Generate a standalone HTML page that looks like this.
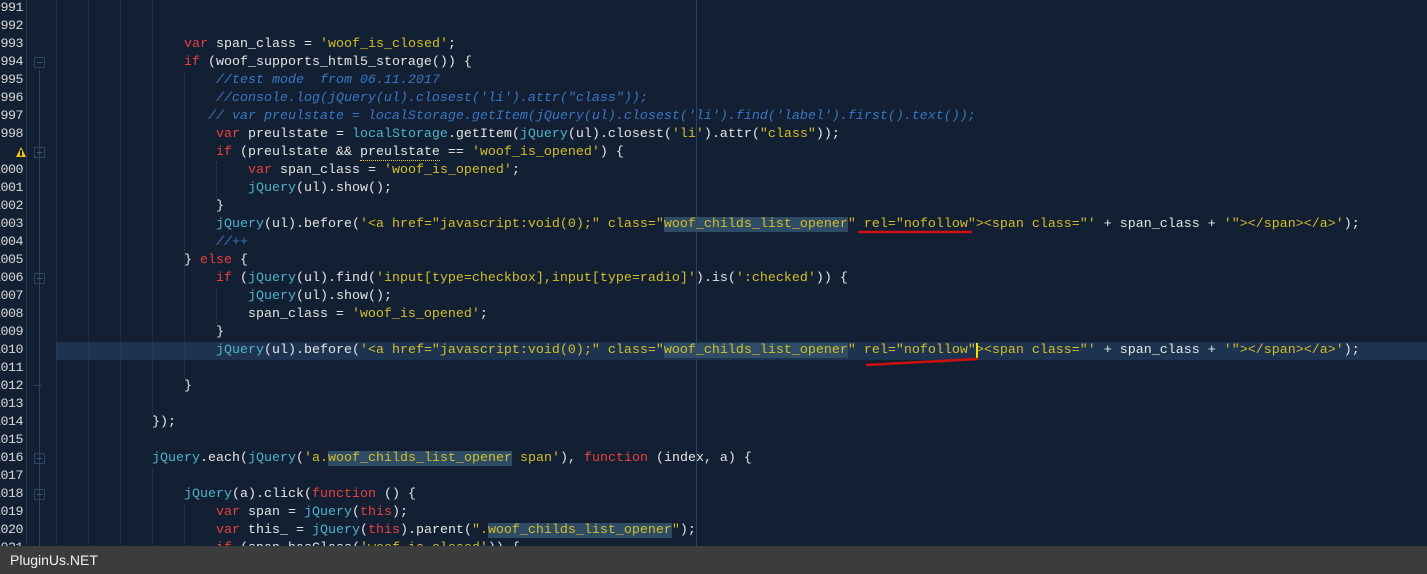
<!DOCTYPE html>
<html><head><meta charset="utf-8"><style>
html,body{margin:0;padding:0;}
body{width:1427px;height:574px;background:#131f33;position:relative;overflow:hidden;font-family:"Liberation Mono",monospace;font-size:13.33px;}
.ln{position:absolute;left:-30px;width:53px;text-align:right;color:#d8d8d8;height:18px;line-height:18px;letter-spacing:-0.5px}
.c{position:absolute;left:56px;white-space:pre;color:#e6e6e6;height:18px;line-height:18px;}
.k{color:#e8413f}.j{color:#4fb3c8}.s{color:#d2bf2a}.m{color:#3a77c4;font-style:italic}
.h{background:#2f4c66}
.g{position:absolute;top:0;height:546px;border-left:1px dotted #2f3d52}
.cur{position:absolute;top:342px;width:1371px;height:18px;background:#1d3350;left:56px}
.fold{position:absolute;left:34px;width:11px;height:11px;border:1px solid #2d4460;box-sizing:border-box}
.fold:after{content:"";position:absolute;left:2px;top:4px;width:5px;height:1px;background:#3d5a7a}
.bar{position:absolute;left:0;top:546px;width:1427px;height:28px;background:#3c3c3c;color:#f2f2f2;font-family:"Liberation Sans","DejaVu Sans",sans-serif;font-size:14px;line-height:28px;padding-left:10px;box-sizing:border-box}
</style></head><body>
<div class="cur"></div>
<div style="position:absolute;left:26px;top:0;width:1px;height:546px;background:#2a3548"></div>
<div style="position:absolute;left:39px;top:70px;width:1px;height:476px;background:#2b4260"></div>
<div style="position:absolute;left:696px;top:0;width:1px;height:546px;background:#23456a"></div>
<div class="g" style="left:56px"></div><div class="g" style="left:88px"></div><div class="g" style="left:120px"></div>
<div class="g" style="left:152px;top:0;height:414px"></div>
<div class="g" style="left:152px;top:468px;height:78px"></div>
<div class="g" style="left:184px;top:72px;height:306px"></div>
<div class="g" style="left:184px;top:504px;height:42px"></div>
<div class="g" style="left:216px;top:162px;height:36px"></div>
<div class="g" style="left:216px;top:288px;height:36px"></div>
<div class="fold" style="top:57px"></div>
<div class="fold" style="top:147px"></div>
<div class="fold" style="top:273px"></div>
<div class="fold" style="top:453px"></div>
<div class="fold" style="top:489px"></div>
<div style="position:absolute;left:34px;top:385px;width:8px;height:1px;background:#2b4260"></div>
<div style="position:absolute;left:16px;top:147px;width:0;height:0;border-left:5px solid transparent;border-right:5px solid transparent;border-bottom:10px solid #e8c619"></div>
<div style="position:absolute;left:20px;top:150px;width:2px;height:6px;background:#222"></div>

<div class="ln" style="top:0">991</div><div class="ln" style="top:18px">992</div><div class="ln" style="top:36px">993</div><div class="ln" style="top:54px">994</div><div class="ln" style="top:72px">995</div><div class="ln" style="top:90px">996</div><div class="ln" style="top:108px">997</div><div class="ln" style="top:126px">998</div>
<div class="ln" style="top:162px">1000</div><div class="ln" style="top:180px">1001</div><div class="ln" style="top:198px">1002</div><div class="ln" style="top:216px">1003</div><div class="ln" style="top:234px">1004</div><div class="ln" style="top:252px">1005</div><div class="ln" style="top:270px">1006</div><div class="ln" style="top:288px">1007</div><div class="ln" style="top:306px">1008</div><div class="ln" style="top:324px">1009</div><div class="ln" style="top:342px">1010</div><div class="ln" style="top:360px">1011</div><div class="ln" style="top:378px">1012</div><div class="ln" style="top:396px">1013</div><div class="ln" style="top:414px">1014</div><div class="ln" style="top:432px">1015</div><div class="ln" style="top:450px">1016</div><div class="ln" style="top:468px">1017</div><div class="ln" style="top:486px">1018</div><div class="ln" style="top:504px">1019</div><div class="ln" style="top:522px">1020</div><div class="ln" style="top:540px">1021</div>

<div class="c" style="top:36px">                <span class="k">var</span> span_class = <span class="s">'woof_is_closed'</span>;</div>
<div class="c" style="top:54px">                <span class="k">if</span> (woof_supports_html5_storage()) {</div>
<div class="c" style="top:72px">                    <span class="m">//test mode  from 06.11.2017</span></div>
<div class="c" style="top:90px">                    <span class="m">//console.log(jQuery(ul).closest('li').attr("class"));</span></div>
<div class="c" style="top:108px">                   <span class="m">// var preulstate = localStorage.getItem(jQuery(ul).closest('li').find('label').first().text());</span></div>
<div class="c" style="top:126px">                    <span class="k">var</span> preulstate = <span class="j">localStorage</span>.getItem(<span class="j">jQuery</span>(ul).closest(<span class="s">'li'</span>).attr(<span class="s">"class"</span>));</div>
<div class="c" style="top:144px">                    <span class="k">if</span> (preulstate &amp;&amp; <span style="border-bottom:1px dotted #e8d21a">preulstate</span> == <span class="s">'woof_is_opened'</span>) {</div>
<div class="c" style="top:162px">                        <span class="k">var</span> span_class = <span class="s">'woof_is_opened'</span>;</div>
<div class="c" style="top:180px">                        <span class="j">jQuery</span>(ul).show();</div>
<div class="c" style="top:198px">                    }</div>
<div class="c" style="top:216px">                    <span class="j">jQuery</span>(ul).before(<span class="s">'&lt;a href="javascript:void(0);" class="<span class="h">woof_childs_list_opener</span>" rel="nofollow"&gt;&lt;span class="'</span> + span_class + <span class="s">'"&gt;&lt;/span&gt;&lt;/a&gt;'</span>);</div>
<div class="c" style="top:234px">                    <span class="m">//++</span></div>
<div class="c" style="top:252px">                } <span class="k">else</span> {</div>
<div class="c" style="top:270px">                    <span class="k">if</span> (<span class="j">jQuery</span>(ul).find(<span class="s">'input[type=checkbox],input[type=radio]'</span>).is(<span class="s">':checked'</span>)) {</div>
<div class="c" style="top:288px">                        <span class="j">jQuery</span>(ul).show();</div>
<div class="c" style="top:306px">                        span_class = <span class="s">'woof_is_opened'</span>;</div>
<div class="c" style="top:324px">                    }</div>
<div class="c" style="top:342px">                    <span class="j">jQuery</span>(ul).before(<span class="s">'&lt;a href="javascript:void(0);" class="<span class="h">woof_childs_list_opener</span>" rel="nofollow"&gt;&lt;span class="'</span> + span_class + <span class="s">'"&gt;&lt;/span&gt;&lt;/a&gt;'</span>);</div>
<div class="c" style="top:378px">                }</div>
<div class="c" style="top:414px">            });</div>
<div class="c" style="top:450px">            <span class="j">jQuery</span>.each(<span class="j">jQuery</span>(<span class="s">'a.<span class="h">woof_childs_list_opener</span> span'</span>), <span class="k">function</span> (index, a) {</div>
<div class="c" style="top:486px">                <span class="j">jQuery</span>(a).click(<span class="k">function</span> () {</div>
<div class="c" style="top:504px">                    <span class="k">var</span> span = <span class="j">jQuery</span>(<span class="k">this</span>);</div>
<div class="c" style="top:522px">                    <span class="k">var</span> this_ = <span class="j">jQuery</span>(<span class="k">this</span>).parent(<span class="s">".<span class="h">woof_childs_list_opener</span>"</span>);</div>
<div class="c" style="top:540px">                    <span class="k">if</span> (span.hasClass(<span class="s">'woof_is_closed'</span>)) {</div>

<div style="position:absolute;left:976px;top:343px;width:2px;height:15px;background:#f5e000"></div>
<svg style="position:absolute;left:0;top:0" width="1427" height="546">
<line x1="858" y1="232" x2="972" y2="232" stroke="#d01010" stroke-width="2.5"/>
<line x1="866" y1="365" x2="978" y2="359" stroke="#d01010" stroke-width="2.5"/>
</svg>
<div class="bar">PluginUs.NET</div>
</body></html>
